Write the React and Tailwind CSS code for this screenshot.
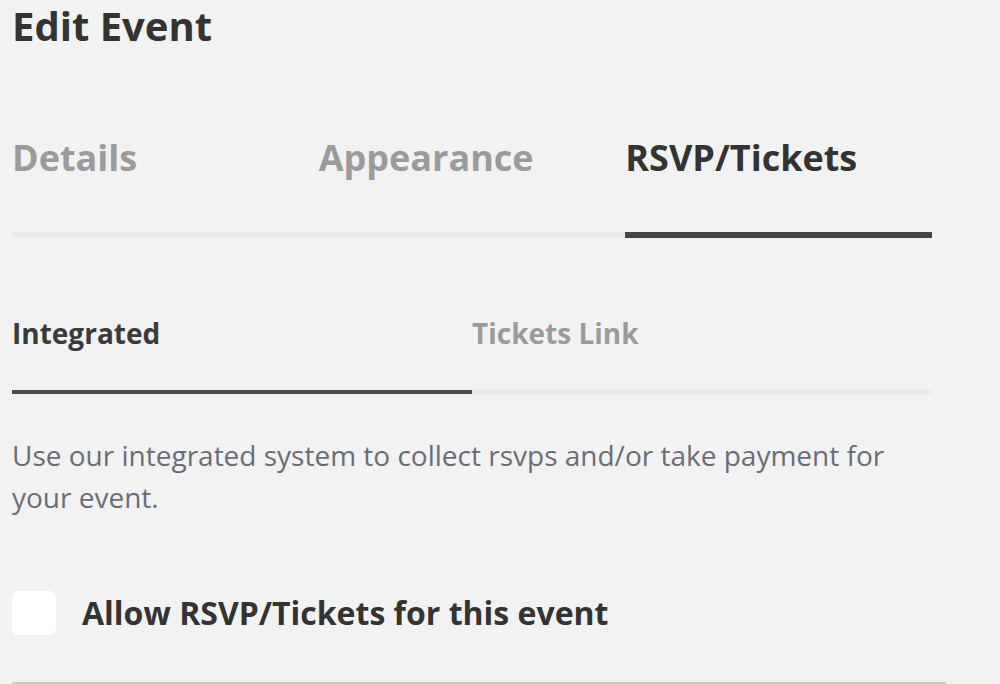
import { useState } from 'react';

const tabs = ['Details', 'Appearance', 'RSVP/Tickets'];
const subTabs = ['Integrated', 'Tickets Link'];

export default function App() {
  const [tab, setTab] = useState(2);
  const [sub, setSub] = useState(0);
  const [allow, setAllow] = useState(false);

  return (
    <div className="min-h-[684px] w-[1000px] overflow-hidden bg-[#f2f2f2] font-['Open_Sans',sans-serif]">
      <div className="w-[934px] pl-[12px]">
        <h1 className="pt-[1px] text-[40px] font-bold leading-[50px] text-[#333]">Edit Event</h1>

        <div className="mt-[79px] grid w-[920px] grid-cols-3">
          {tabs.map((t, i) => (
            <button
              key={t}
              type="button"
              onClick={() => setTab(i)}
              className={
                'flex h-[108px] items-start border-b-[6px] text-left text-[36px] font-bold leading-[56px] ' +
                (tab === i ? 'border-[#454545] text-[#333]' : 'border-[#ebebeb] text-[#9b9b9b]')
              }
            >
              {t}
            </button>
          ))}
        </div>

        <div className="mt-[75px] grid w-[920px] grid-cols-2">
          {subTabs.map((t, i) => (
            <button
              key={t}
              type="button"
              onClick={() => setSub(i)}
              className={
                'flex h-[81px] items-start border-b-4 text-left text-[28px] font-bold leading-[40px] ' +
                (sub === i ? 'border-[#4a4a4a] text-[#3a3a3a]' : 'border-[#ebebeb] text-[#9b9b9b]')
              }
            >
              {t}
            </button>
          ))}
        </div>

        <p className="mt-[40px] w-[900px] text-[28px] leading-[42px] text-[#6a6d78]">
          Use our integrated system to collect rsvps and/or take payment for your event.
        </p>

        <label className="mt-[73px] flex cursor-pointer items-center gap-[26px]">
          <input
            type="checkbox"
            checked={allow}
            onChange={(e) => setAllow(e.target.checked)}
            className="h-[44px] w-[44px] shrink-0 appearance-none rounded-[6px] bg-white"
          />
          <span className="text-[32px] font-bold leading-[44px] text-[#333]">Allow RSVP/Tickets for this event</span>
        </label>

        <div className="mt-[47px] h-[2px] w-[934px] bg-[#c8c8c8]" />
      </div>
    </div>
  );
}
